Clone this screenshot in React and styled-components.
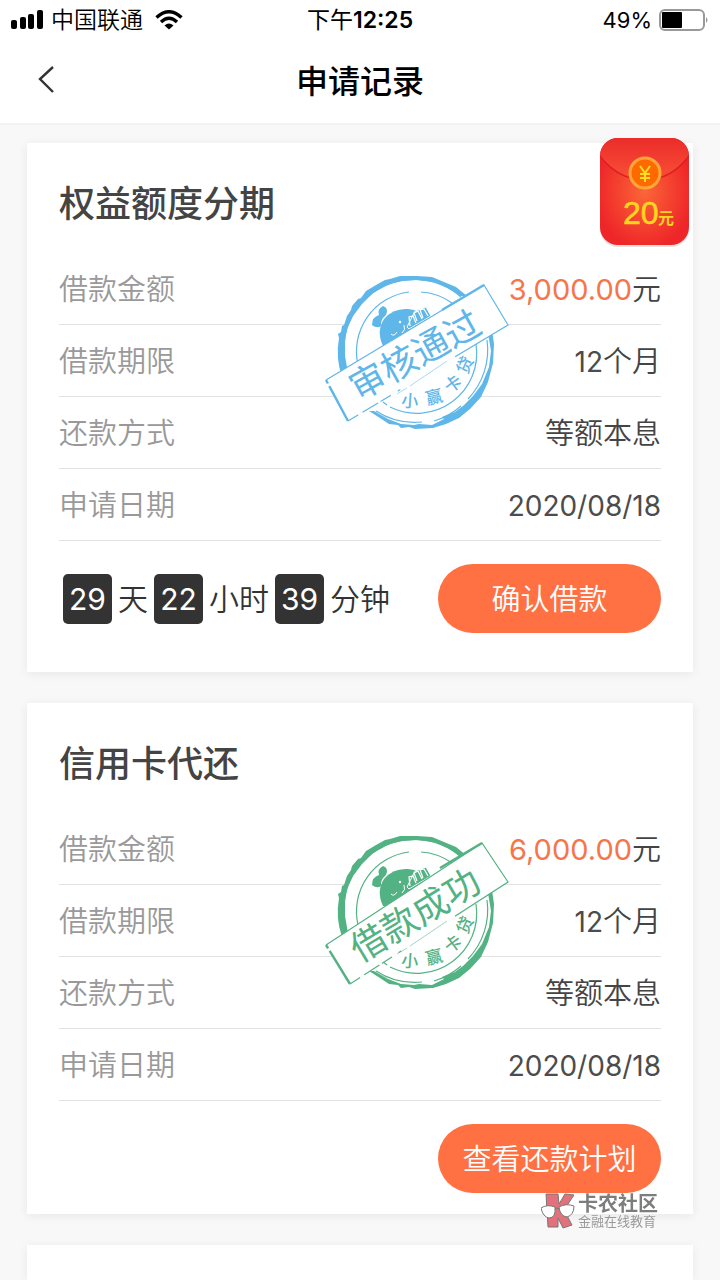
import React from 'react';
import styled, { createGlobalStyle } from 'styled-components';

const GlobalStyle = createGlobalStyle`
  * {
    box-sizing: border-box;
  }

  body {
    margin: 0;
    background: #f8f8f8;
    font-family: 'Noto Sans CJK SC', sans-serif;
    color: #333;
  }
`;

const Page = styled.div`
  display: flex;
  flex-direction: column;
  height: 100vh;
  overflow: hidden;
`;

const Top = styled.header`
  flex: none;
  background: #fff;
  border-bottom: 2px solid #f2f2f2;
`;

const StatusBar = styled.div`
  display: grid;
  grid-template-columns: 1fr auto 1fr;
  align-items: center;
  height: 40px;
  padding: 0 11px;
  font-family: Inter, 'Noto Sans CJK SC', sans-serif;
  font-size: 23px;
  line-height: 40px;
  color: #000;
`;

const StatusSide = styled.div`
  display: flex;
  align-items: center;
  justify-content: ${props => props.$end ? 'flex-end' : 'flex-start'};
  gap: 7px;
`;

const Carrier = styled.span`
  margin-right: 5px;
  font-weight: 350;
`;

const Clock = styled.div`
  font-weight: 600;
`;

const ClockPeriod = styled.span`
  font-weight: 400;
`;

const Percent = styled.span`
  font-size: 22px;
`;

const NavBar = styled.div`
  display: grid;
  grid-template-columns: 1fr auto 1fr;
  align-items: center;
  height: 83px;
  padding: 0 32px 5px;
`;

const BackButton = styled.button`
  display: flex;
  justify-self: start;
  padding: 0;
  border: 0;
  background: none;
`;

const PageTitle = styled.h1`
  margin: 0;
  font-size: 32px;
  font-weight: 500;
  line-height: 40px;
  color: #000;
`;

const List = styled.main`
  flex: 1;
  display: flex;
  flex-direction: column;
  gap: 31px;
  padding: 18px 27px 0;
`;

const Card = styled.section`
  position: relative;
  flex: none;
  padding: 0 32px ${props => props.$bottom || 0}px;
  background: #fff;
  box-shadow: 0 2px 10px rgba(0, 0, 0, 0.07);
`;

const NextCard = styled(Card)`
  flex: 1;
`;

const CardTitle = styled.h2`
  margin: 0;
  padding: 32px 0 26px;
  font-size: 36px;
  font-weight: 500;
  line-height: 52px;
  color: #444;
`;

const Details = styled.dl`
  margin: 0;
`;

const Row = styled.div`
  display: flex;
  align-items: center;
  justify-content: space-between;
  height: 72px;
  padding-bottom: 4px;
  border-bottom: 1px solid #e2e2e2;
  font-size: 29px;
  font-weight: 350;
`;

const Label = styled.dt`
  color: #999;
`;

const Value = styled.dd`
  margin: 0;
  color: #444;
`;

const Digits = styled.span`
  font-family: Inter, sans-serif;
  font-size: 28px;
  font-weight: 400;
  color: #4c4c4c;
`;

const Amount = styled(Digits)`
  font-size: 29px;
  color: #f7754a;
`;

const CardFooter = styled.div`
  display: flex;
  align-items: center;
  justify-content: space-between;
  padding-top: 23px;
`;

const Countdown = styled.div`
  display: flex;
  align-items: center;
  gap: 6px;
  padding-left: 4px;
  font-size: 30px;
  font-weight: 350;
`;

const TimeUnit = styled.span`
  padding-bottom: 4px;
`;

const TimeBox = styled.span`
  width: 49px;
  border-radius: 5px;
  background: #333;
  color: #fff;
  font-family: Inter, sans-serif;
  font-weight: 400;
  line-height: 50px;
  text-align: center;
`;

const ActionButton = styled.button`
  width: 223px;
  height: 69px;
  margin-left: auto;
  padding: 0 0 3px;
  border: 0;
  border-radius: 35px;
  background: #ff7143;
  color: #fff;
  font-family: inherit;
  font-size: 29px;
  font-weight: 350;
`;

const StampImage = styled.svg`
  position: absolute;
  top: 117px;
  left: 283px;
  width: 220px;
  height: 180px;
  font-family: 'Noto Sans CJK SC', sans-serif;
`;

const Packet = styled.a`
  position: absolute;
  top: -6px;
  right: 3px;
  display: block;
  width: 92px;
  height: 112px;

  svg {
    display: block;
  }
`;

const Watermark = styled.div`
  position: fixed;
  right: 62px;
  bottom: 51px;
  display: flex;
  align-items: center;
  gap: 3px;
  color: #7d7d7d;
`;

const BrandName = styled.div`
  font-size: 20px;
  font-weight: 700;
  line-height: 20px;
`;

const BrandSlogan = styled.div`
  font-size: 13px;
  line-height: 16px;
  color: #999;
`;

const records = [
  {
    title: '权益额度分期',
    amount: '3,000.00',
    bottom: 39,
    packet: true,
    countdown: [['29', '天'], ['22', '小时'], ['39', '分钟']],
    action: '确认借款',
    stamp: {
      text: '审核通过',
      color: '#5fb6e8',
      band: [[16, 120], [174, 25], [198, 65], [38, 161]],
      angle: -29,
    },
  },
  {
    title: '信用卡代还',
    amount: '6,000.00',
    bottom: 21,
    action: '查看还款计划',
    stamp: {
      text: '借款成功',
      color: '#53b283',
      band: [[16, 125], [172, 23], [198, 62], [40, 164]],
      angle: -31,
    },
  },
];

const stampLetters = [
  ['小', 100, 141, 4],
  ['赢', 124, 137, -14],
  ['卡', 143, 124, -36],
  ['贷', 155, 105, -66],
];

function Stamp({ text, color, band, angle }) {
  const [a, b, c, d] = band;
  const outline = `M${a} L${b} L${c} L${d} Z`;

  return (
    <StampImage viewBox="0 0 220 180" fill="none" stroke={color} role="img" aria-label={text}>
      <circle cx="106" cy="92" r="74" fill="#fff" fillOpacity="0.85" stroke="none" />
      {/* rough outer ring */}
      <path d="M32 117 A77 77 0 0 1 29 78 L28 74 L31 72 L32 66 L34 65 L37 56 L41 50 L42 46 L48 39 L51 38 L56 31 L66 25 L75 20 L80 19 L90 16 L107 16 L122 17 L134 22 L146 27 L157 36 L150 36 L140 29 L125 22 L107 20 L91 21 L77 25 L63 33 L52 44 L43 56 L37 69 L35 82 L35 96 L38 113 Z" fill={color} stroke="none" />
      <path d="M182 70 L184 84 L183 103 L178 122 L171 137 L160 149 L149 158 L136 164 L123 168 L105 169 L99 167 L91 168 L88 165 L79 164 L70 158 L59 151 L64 151 L78 159 L91 164 L104 165 L109 164 L122 165 L134 159 L132 157 L145 152 L153 146 L163 136 L172 124 L179 107 L181 91 L178 73 Z" fill={color} stroke="none" />
      <path d="M36 110 A71 71 0 0 1 151 37" strokeWidth="1.2" />
      <path d="M177 80 A71 71 0 0 1 158 139 M151 146 A71 71 0 0 1 124 161 M112 162 A71 71 0 0 1 66 151" strokeWidth="1.2" />
      <path d="M48 105 A60 60 0 0 1 99 32 M111 32 A60 60 0 0 1 142 43" strokeWidth="1.2" />
      <path d="M166 84 A60 60 0 0 1 80 147 M77 145 L73 142" strokeWidth="1.2" />
      {/* mascot */}
      <path d="M73 86 Q66 71 74 59 Q83 48 98 49 Q111 50 117 60 L113 64 L75 86 Z" fill={color} stroke="none" />
      <path d="M62 65 Q62 57 69 55 Q67 49 73 46 Q79 48 76 55 Q70 60 71 66 Q67 69 62 65 Z" fill={color} stroke="none" />
      <path d="M97 67 L105 51 L116 47 L121 56 L99 69 Z" fill={color} stroke="#fff" strokeWidth="1" />
      <path d="M100 66 L99 57 L103 56 L106 63 M107 61 L104 53 L108 51 L112 59 M113 58 L110 50 L114 49 L118 56" stroke="#fff" strokeWidth="1.2" />
      <circle cx="90" cy="62" r="1.2" fill="#fff" stroke="none" />
      <path d="M81 74 Q84 77 87 72 M94 65 Q96 70 92 73" stroke="#fff" strokeWidth="1" />
      {/* ribbon */}
      <path d={outline} fill="#fff" stroke="none" />
      <path d={`M${a} L${b} L${c} L${d}`} strokeWidth="1.2" />
      <path d={`M${a} L${d}`} strokeWidth="2.4" strokeDasharray="4 3 50" />
      <path d={`M${b[0] - 42} ${b[1] + 25} L${b}`} strokeWidth="2.4" />
      <path d={`M${d} L${c}`} stroke="#fff" strokeWidth="2" strokeDasharray="0 12 5 18 3 12 8 3 64 100" />
      <path d="M87 134 L97 128 M100 126 L137 101" strokeWidth="1" strokeOpacity="0.5" />
      <text
        transform={`translate(105 95) rotate(${angle})`}
        y="13"
        fill={color}
        stroke="none"
        fontSize="36"
        fontWeight="400"
        textAnchor="middle"
      >
        {text}
      </text>
      {stampLetters.map(([letter, x, y, turn]) => (
        <text
          key={letter}
          transform={`translate(${x} ${y}) rotate(${turn})`}
          y="6"
          fill={color}
          stroke="none"
          fontSize="17"
          fontWeight="500"
          textAnchor="middle"
        >
          {letter}
        </text>
      ))}
    </StampImage>
  );
}

function RedPacket() {
  return (
    <Packet href="#coupon" aria-label="20元">
      <svg width="92" height="112" viewBox="0 0 92 112">
        <defs>
          <radialGradient id="packetBody" cx="0.5" cy="0.5" r="0.55">
            <stop offset="0" stopColor="#fb6637" />
            <stop offset="1" stopColor="#ee2529" />
          </radialGradient>
          <linearGradient id="packetFlap" x1="0" y1="0" x2="0" y2="1">
            <stop offset="0" stopColor="#ea2b2a" />
            <stop offset="1" stopColor="#fa5136" />
          </linearGradient>
          <clipPath id="packetClip">
            <rect x="2" y="1" width="89" height="107" rx="18" />
          </clipPath>
        </defs>
        <rect x="2" y="3" width="89" height="107" rx="18" fill="#000" opacity="0.12" />
        <g clipPath="url(#packetClip)">
          <rect x="2" y="1" width="89" height="107" fill="url(#packetBody)" />
          <path d="M0 16 Q20 43 47 43 Q73 43 92 16 V0 H0 Z" fill="url(#packetFlap)" />
          <path d="M1 18 Q20 43 47 43 Q73 43 92 18" fill="none" stroke="#dc2023" strokeWidth="1.5" />
        </g>
        <circle cx="47" cy="36" r="15" fill="#ff6a00" stroke="#ffa63a" strokeWidth="3" />
        <path d="M42 29 L47 36 L52 29 M47 36 V45 M42 37 H52 M42 41 H52" fill="none" stroke="#ffe01e" strokeWidth="2" />
        <g fill="#ffd51e">
          <text x="25" y="87" fontFamily="Liberation Sans, sans-serif" fontSize="32" stroke="#ffd51e" strokeWidth="0.6">20</text>
          <text x="60" y="87" fontFamily="Noto Sans CJK SC, sans-serif" fontSize="16" fontWeight="700">元</text>
        </g>
      </svg>
    </Packet>
  );
}

function Record({ record }) {
  return (
    <Card $bottom={record.bottom}>
      <CardTitle>{record.title}</CardTitle>
      <Details>
        <Row><Label>借款金额</Label><Value><Amount>{record.amount}</Amount>元</Value></Row>
        <Row><Label>借款期限</Label><Value><Digits>12</Digits>个月</Value></Row>
        <Row><Label>还款方式</Label><Value>等额本息</Value></Row>
        <Row><Label>申请日期</Label><Value><Digits>2020/08/18</Digits></Value></Row>
      </Details>
      <CardFooter>
        {record.countdown && (
          <Countdown>
            {record.countdown.map(([value, unit]) => (
              <React.Fragment key={unit}>
                <TimeBox>{value}</TimeBox>
                <TimeUnit>{unit}</TimeUnit>
              </React.Fragment>
            ))}
          </Countdown>
        )}
        <ActionButton type="button">{record.action}</ActionButton>
      </CardFooter>
      <Stamp {...record.stamp} />
      {record.packet && <RedPacket />}
    </Card>
  );
}

function App() {
  return (
    <Page>
      <GlobalStyle />
      <Top>
        <StatusBar>
          <StatusSide>
            <svg width="33" height="20" viewBox="0 0 33 20">
              <rect x="0" y="10" width="6" height="9" rx="2" />
              <rect x="9" y="7" width="6" height="12" rx="2" />
              <rect x="17" y="4" width="6" height="15" rx="2" />
              <rect x="26" y="0" width="6" height="19" rx="2" />
            </svg>
            <Carrier>中国联通</Carrier>
            <svg width="28" height="20" viewBox="0 0 28 20" fill="none" stroke="#000" strokeWidth="3.4">
              <path d="M1.5 7.5 Q14 -4 26.500 7.500" />
              <path d="M6 12 Q14 4.500 22 12" />
              <path d="M14 19.500 L9.500 15.500 Q14 11.500 18.500 15.500 Z" fill="#000" stroke="none" />
            </svg>
          </StatusSide>
          <Clock><ClockPeriod>下午</ClockPeriod>12:25</Clock>
          <StatusSide $end>
            <Percent>49%</Percent>
            <svg width="50" height="22" viewBox="0 0 50 22">
              <rect x="1" y="1" width="44" height="20" rx="5" fill="none" stroke="#999" strokeWidth="2" />
              <rect x="3" y="3" width="20" height="16" rx="1" />
              <path d="M47 8 Q50 11 47 14 Z" fill="#999" />
            </svg>
          </StatusSide>
        </StatusBar>
        <NavBar>
          <BackButton type="button" aria-label="返回">
            <svg width="28" height="30" viewBox="0 0 28 30" fill="none" stroke="#333" strokeWidth="2.4">
              <path d="M21 3 L8 15 L21 28" />
            </svg>
          </BackButton>
          <PageTitle>申请记录</PageTitle>
        </NavBar>
      </Top>
      <List>
        {records.map(record => <Record key={record.title} record={record} />)}
        <NextCard />
      </List>
      <Watermark>
        <svg width="34" height="36" viewBox="0 0 34 36" stroke="#777" strokeWidth="1">
          <path d="M5 1 L17 1 L18 11 L24 1 L33 2 L23 17 L31 32 L22 35 L17 25 L17 34 L7 34 Z" fill="#e2717c" />
          <path d="M0 15 Q6 11 14 14 Q15 25 8 25 Q2 24 0 15 Z" fill="#fff" />
          <path d="M18 14 Q25 10 33 13 Q33 22 26 24 Q19 23 18 14 Z" fill="#fff" />
          <path d="M14 16 Q16 14 18 16" fill="none" />
        </svg>
        <div>
          <BrandName>卡农社区</BrandName>
          <BrandSlogan>金融在线教育</BrandSlogan>
        </div>
      </Watermark>
    </Page>
  );
}

export default App;
